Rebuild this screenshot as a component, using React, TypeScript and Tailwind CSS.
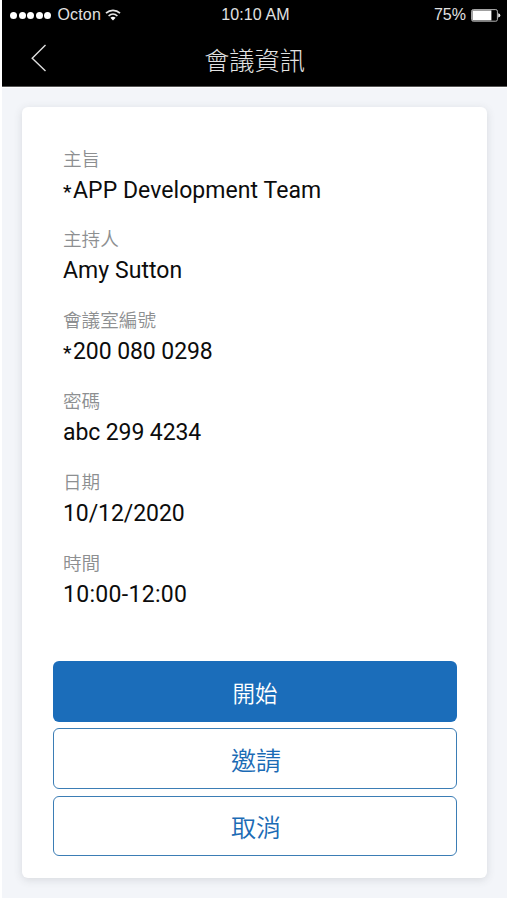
type Field = { label: string; value: string; starred?: boolean; spacing: string };

const fields: Field[] = [
  { label: "主旨", value: "APP Development Team", starred: true, spacing: "tracking-[0.06px]" },
  { label: "主持人", value: "Amy Sutton", spacing: "tracking-[0.05px]" },
  { label: "會議室編號", value: "200 080 0298", starred: true, spacing: "tracking-[-0.08px]" },
  { label: "密碼", value: "abc 299 4234", spacing: "tracking-[-0.1px]" },
  { label: "日期", value: "10/12/2020", spacing: "tracking-[-0.08px]" },
  { label: "時間", value: "10:00-12:00", spacing: "tracking-[0.3px]" },
];

function Wifi() {
  return (
    <svg width="16" height="12" viewBox="0 0 16 12" fill="none" stroke="#e6e6e6" strokeWidth="1.7">
      <path d="M1 4.2C5 .4 11 .4 15 4.2" />
      <path d="M3.6 7C6.2 4.6 9.8 4.6 12.4 7" />
      <path d="M5.4 8.8C7 7.4 9 7.4 10.6 8.8L8 11.4Z" fill="#fff" stroke="none" />
    </svg>
  );
}

function Battery() {
  return (
    <svg width="30" height="13" viewBox="0 0 30 13">
      <rect x=".6" y=".6" width="25.8" height="11.6" rx="1.6" fill="none" stroke="#b5b5b5" strokeWidth="1" />
      <rect x="1.4" y="1.4" width="19" height="10" fill="#fff" />
      <path d="M27.2 4.2Q29.4 4.8 29.4 6.4T27.2 8.6Z" fill="#e6e6e6" />
    </svg>
  );
}

function Header() {
  return (
    <header className="h-[87px] border-b border-[#555] bg-black text-[#e2e2e2]">
      <div className="grid h-[30px] grid-cols-3 items-center pr-[6px] pl-2 font-['Liberation_Sans',sans-serif] text-[16px]">
        <div className="flex items-center">
          <div className="flex gap-[1.6px]">
            {[0, 1, 2, 3, 4].map((dot) => (
              <i key={dot} className="size-[7px] rounded-full bg-white" />
            ))}
          </div>
          <span className="mr-[4px] ml-[6px] tracking-[0.2px]">Octon</span>
          <Wifi />
        </div>
        <span className="text-center tracking-[0.1px]">10:10 AM</span>
        <div className="flex items-center justify-end gap-[5px]">
          <span>75%</span>
          <Battery />
        </div>
      </div>
      <div className="grid h-[56px] grid-cols-[60px_1fr_60px] items-center">
        <button aria-label="返回" className="flex justify-center pl-[14px]">
          <svg width="16" height="28" viewBox="0 0 16 28" fill="none" stroke="#dedede" strokeWidth="1.4">
            <path d="M14.5 1L1.2 14.2L14.5 27" />
          </svg>
        </button>
        <h1 className="pt-[7px] text-center text-[25.2px] leading-[36px] font-light">會議資訊</h1>
      </div>
    </header>
  );
}

export default function App() {
  return (
    <div className="h-[900px] overflow-hidden bg-white pl-[2px] font-[Roboto,'Noto_Sans_CJK_TC',sans-serif]">
      <Header />
      <main className="mt-[1px] h-[810px] bg-[#f3f5f9] px-[20px] pt-[19px]">
        <section className="h-[771px] rounded-[6px] bg-white pt-[39px] pr-[30px] pl-[31px] shadow-[0_2px_8px_rgba(60,65,75,0.15)]">
          <dl className="h-[515px] pt-[0.6px] pl-[10px]">
            {fields.map((field) => (
              <div key={field.label} className="h-[80.8px]">
                <dt className="h-[27px] text-[18.6px] leading-[27px] font-[350] text-[#8d8f91]">{field.label}</dt>
                <dd className={`flex h-[34px] items-center text-[23px] leading-[34px] text-[#0c0c0c] ${field.spacing}`}>
                  {field.starred && <span className="w-[10px] pt-[2px] text-[19px] font-medium">*</span>}
                  <span>{field.value}</span>
                </dd>
              </div>
            ))}
          </dl>
          <div className="flex flex-col gap-[6.7px] text-[25px] font-[350] text-[#1b6bb5]">
            <button className="h-[60.6px] rounded-[6px] bg-[#1b6dba] pt-[7px] text-[22.5px] text-white">開始</button>
            <button className="h-[60.6px] rounded-[6px] border border-[#3b7db5] pt-[7px] pl-[2px]">邀請</button>
            <button className="h-[60.6px] rounded-[6px] border border-[#3b7db5] pt-[6px] pl-[2px]">取消</button>
          </div>
        </section>
      </main>
    </div>
  );
}
